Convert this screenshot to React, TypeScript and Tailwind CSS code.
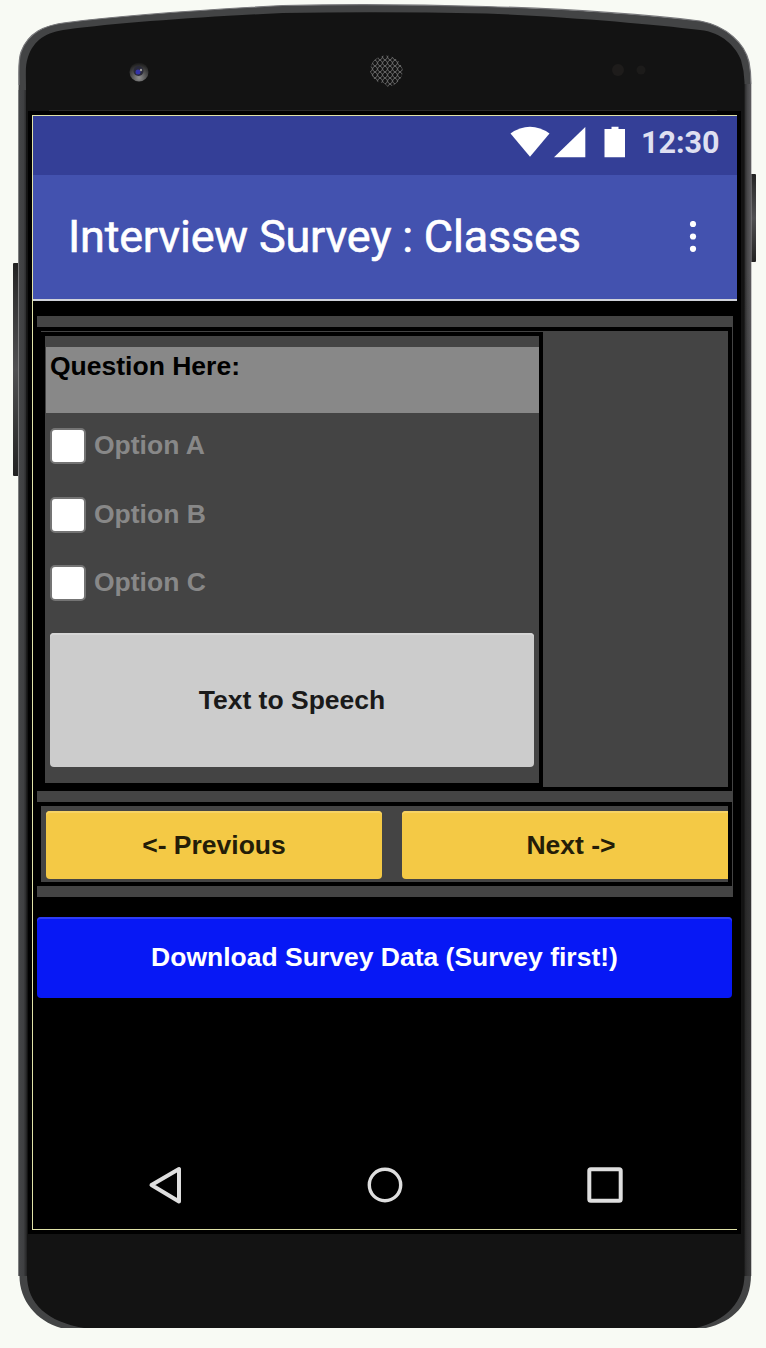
import type { ReactNode } from 'react';

const OUTER =
  'M18.500 90 C19 72 18 60 21 52 C28 33 44 25 67 22.500 C117 16 200 10 283 5.500 Q383 3.500 486 6.500 C570 9 650 15 700 21 C727 26 745 44 749 62 Q751 72 751 84 V1275 C751 1304 733 1322 706 1328 H61 C36 1321 19 1300 19.500 1275 Z';
const INNER =
  'M26 90 C26 72 25 66 28 57 C34 40 46 32 67 29.500 C117 23 200 17 283 13 Q383 11.500 486 13.500 C570 17 650 24 700 30 C722 32 736 47 741 60 Q744 70 744.500 82 V1275 C744 1302 726 1321 696 1328 H84 C48 1322 27 1304 27 1275 Z';

function PhoneBody() {
  return (
    <svg className="absolute inset-0" width="766" height="1348" viewBox="0 0 766 1348" aria-hidden="true">
      <defs>
        <linearGradient id="left" x1="18" x2="28" y1="0" y2="0" gradientUnits="userSpaceOnUse">
          <stop offset="0" stopColor="#a5a5a5" />
          <stop offset=".12" stopColor="#444547" />
          <stop offset=".55" stopColor="#3f4042" />
          <stop offset="1" stopColor="#1b1b1b" />
        </linearGradient>
        <linearGradient id="right" x1="743" x2="752" y1="0" y2="0" gradientUnits="userSpaceOnUse">
          <stop offset="0" stopColor="#1b1b1b" />
          <stop offset=".5" stopColor="#48484a" />
          <stop offset=".85" stopColor="#5a595c" />
          <stop offset="1" stopColor="#b5b5b5" />
        </linearGradient>
        <linearGradient id="rightFade" x1="0" x2="0" y1="0" y2="1348" gradientUnits="userSpaceOnUse">
          <stop offset=".2" stopColor="#222" stopOpacity="0" />
          <stop offset=".6" stopColor="#222" stopOpacity=".75" />
          <stop offset="1" stopColor="#222" stopOpacity=".5" />
        </linearGradient>
        <linearGradient id="key" x1="0" x2="0" y1="0" y2="1">
          <stop offset="0" stopColor="#222" />
          <stop offset=".15" stopColor="#333" />
          <stop offset=".5" stopColor="#505052" />
          <stop offset=".85" stopColor="#303030" />
          <stop offset="1" stopColor="#222" />
        </linearGradient>
        <pattern id="mesh" width="5" height="6" patternUnits="userSpaceOnUse">
          <path d="M0 0 Q2.500 1.500 2.500 3 T5 6 M5 0 Q2.500 1.500 2.500 3 T0 6" fill="none" stroke="#686868" strokeWidth="1" />
        </pattern>
        <radialGradient id="lens" cx=".5" cy=".8" r=".8">
          <stop offset="0" stopColor="#909090" />
          <stop offset=".45" stopColor="#555" />
          <stop offset="1" stopColor="#151515" />
        </radialGradient>
      </defs>
      <rect x="13" y="263" width="7" height="213" rx="1" fill="url(#key)" />
      <rect x="749" y="174" width="7" height="88" rx="1" fill="url(#key)" />
      <path d={OUTER} fill="#434445" />
      <rect x="18" y="90" width="10" height="1186" fill="url(#left)" />
      <rect x="743" y="84" width="8.500" height="1192" fill="url(#right)" />
      <rect x="743" y="84" width="8" height="1192" fill="url(#rightFade)" />
      <path
        d="M19 85 C19 72 18 60 21 52 C28 33 44 25 67 22.500 C117 16 200 10 283 5.500 Q383 3.500 486 6.500 C570 9 650 15 700 21 C727 26 745 44 749 62 Q751 72 751 84"
        fill="none"
        stroke="#77777a"
        strokeWidth="1.200"
      />
      <path d={INNER} fill="#131313" />
      <path d="M49 110.500 H717" stroke="#292929" />
      <circle cx="139" cy="72" r="9.500" fill="url(#lens)" />
      <circle cx="138.500" cy="71" r="5" fill="#2a2a3a" />
      <circle cx="138" cy="72" r="2.500" fill="#3434a8" />
      <circle cx="141" cy="70" r="1.200" fill="#999" />
      <path d="M370 71 Q371 57 385 55.500 Q400 56 403 71 Q401 84 388 87 L384 83 Q373 83 370 71 Z" fill="url(#mesh)" />
      <circle cx="618" cy="70" r="6" fill="#1e1c1b" />
      <circle cx="641" cy="70" r="4.500" fill="#1c1b1a" />
    </svg>
  );
}

function StatusBar() {
  return (
    <div className="flex h-[59px] justify-end bg-[#343f97] pr-[17px]">
      <svg width="120" height="36" viewBox="508 124 120 36" className="mt-2 shrink-0" fill="#fff" aria-hidden="true">
        <path d="M510.5 133.5 Q520 126.8 530 126.8 T549.5 133.5 L530 156.8 Z" />
        <path d="M554 157.2 H585.3 V127 Z" />
        <path d="M604.5 129 H611.5 V126.8 H618.5 V129 H625 V157.2 H604.5 Z" />
      </svg>
      <span className="mt-[9px] ml-[13px] w-[79px] whitespace-nowrap font-[Roboto] text-[30.5px] leading-[36px] font-bold text-[#dfe0f1]">
        12:30
      </span>
    </div>
  );
}

function TitleBar() {
  return (
    <header className="flex h-[126px] items-center justify-between border-b-2 border-[#d0d2da] bg-[#4352af] pr-[40px] pl-[35px]">
      <h1 className="whitespace-nowrap font-[Roboto] text-[45px] leading-[54px] font-normal tracking-[-0.2px] text-white [-webkit-text-stroke:0.6px_#fff]">
        Interview Survey : Classes
      </h1>
      <svg width="8" height="32" viewBox="0 0 8 32" fill="#fff" aria-hidden="true">
        <circle cx="4" cy="3" r="3.1" />
        <circle cx="4" cy="15.5" r="3.1" />
        <circle cx="4" cy="27.8" r="3.1" />
      </svg>
    </header>
  );
}

function Option({ children }: { children: ReactNode }) {
  return (
    <label className="flex h-[68.500px] shrink-0 items-start">
      <span className="box-border h-9 w-9 shrink-0 rounded-[5px] border-2 border-[#747474] bg-white" />
      <span className="ml-[8px] text-[#888]">{children}</span>
    </label>
  );
}

export default function App() {
  return (
    <div className="relative h-[1348px] w-[766px] overflow-hidden bg-[#f8faf4]">
      <PhoneBody />
      <div className="relative pt-[111px] pl-[28px]">
        <main className="h-[1123px] w-[713px] bg-black p-1 font-['Liberation_Sans',Arial,sans-serif] text-[26.5px] leading-[34px] font-bold">
          <div className="flex h-[1115px] flex-col border-y border-l border-[#e0e2a8]">
            <StatusBar />
            <TitleBar />
            <div className="mx-1 mt-[15px] flex w-[696px] flex-col bg-[#444]">
              <section className="mt-[11px] flex h-[464px] w-[695px] items-start border-4 border-black bg-[#444]">
                <div className="mt-px h-[455px] w-[502px] border-4 border-black bg-[#444] pt-[11px]">
                  <div className="ml-px h-[66px] bg-[#888] pt-[2px] pl-[4px] text-black">Question Here:</div>
                  <div className="flex h-[205px] flex-col pt-[15px] pl-[5px]">
                    <Option>Option A</Option>
                    <Option>Option B</Option>
                    <Option>Option C</Option>
                  </div>
                  <button className="mt-[15px] ml-[5px] block h-[134px] w-[484px] rounded-[4px] bg-[#ccc] text-[#1a1a1a] shadow-[inset_0_2px_0_#d6d6d6]">
                    Text to Speech
                  </button>
                </div>
              </section>
              <section className="my-[11px] flex h-[84px] w-[695px] items-start gap-5 overflow-hidden border-4 border-black bg-[#444] pt-[5px] pl-[5px]">
                <button className="h-[68px] w-[336px] shrink-0 rounded-[4px] bg-[#f4c945] text-[#241d08] shadow-[inset_0_2px_0_#f6d264]">
                  &lt;- Previous
                </button>
                <button className="h-[68px] w-[338px] shrink-0 rounded-[4px] bg-[#f4c945] text-[#241d08] shadow-[inset_0_2px_0_#f6d264]">
                  Next -&gt;
                </button>
              </section>
            </div>
            <button className="mx-1 mt-5 h-[81px] w-[695px] rounded-[4px] bg-[#0718f5] pb-[2px] text-white shadow-[inset_0_2px_0_#2e3cf6]">
              Download Survey Data (Survey first!)
            </button>
            <nav className="mt-auto mb-[24px] flex items-center pl-[114px]" aria-label="System">
              <svg width="480" height="40" viewBox="147 1165 480 40" fill="none" stroke="#dedede" strokeLinejoin="round" aria-hidden="true">
                <path d="M151.5 1185 L179 1169 V1201.500 Z" strokeWidth="4" />
                <circle cx="385" cy="1185" r="15.700" strokeWidth="3.400" />
                <rect x="589.300" y="1169.300" width="31.400" height="31.400" rx="1.500" strokeWidth="4" />
              </svg>
            </nav>
          </div>
        </main>
      </div>
    </div>
  );
}
